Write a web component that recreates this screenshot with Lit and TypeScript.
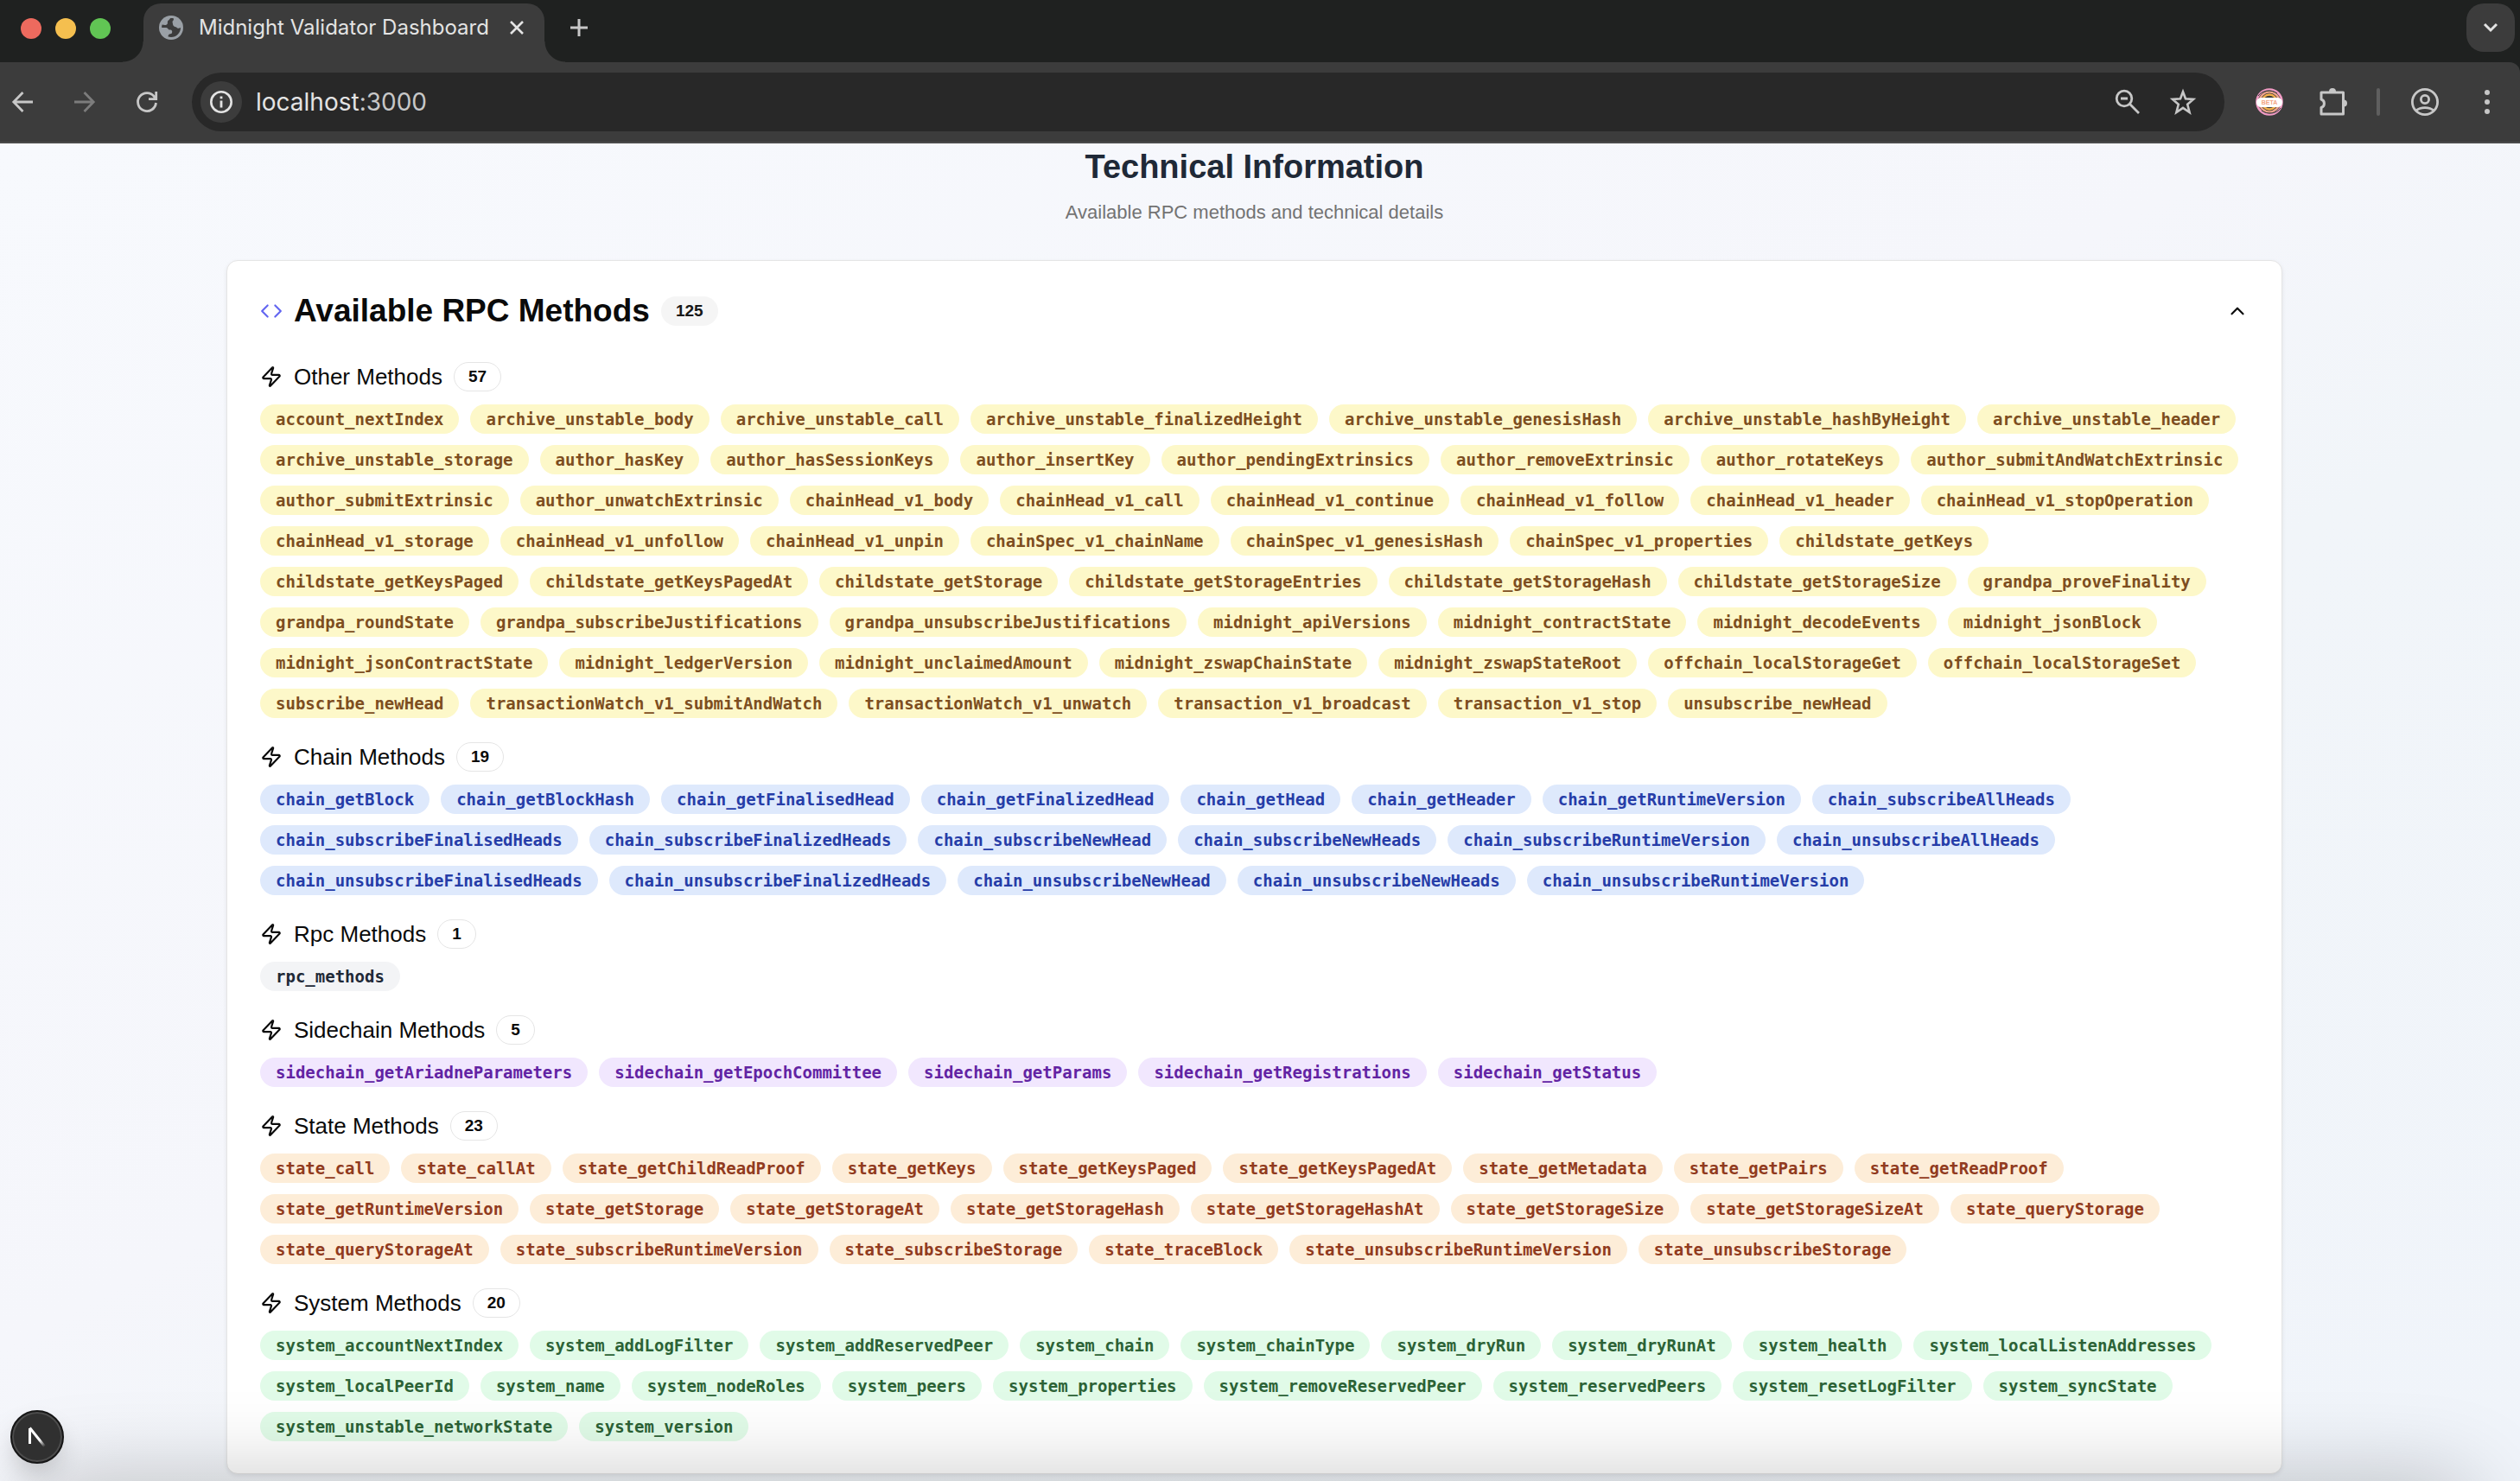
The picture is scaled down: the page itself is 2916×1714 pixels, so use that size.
import { LitElement, html, css } from "lit";
import { customElement, property, state } from "lit/decorators.js";

interface MethodGroup {
  name: string;
  tone: string;
  methods: string[];
}

const list = (prefix: string, names: string): string[] =>
  names.trim().split(/\s+/).map((n) => prefix + n);

const GROUPS: MethodGroup[] = [
  {
    name: "Other",
    tone: "yellow",
    methods: list("", `
      account_nextIndex archive_unstable_body archive_unstable_call archive_unstable_finalizedHeight
      archive_unstable_genesisHash archive_unstable_hashByHeight archive_unstable_header
      archive_unstable_storage author_hasKey author_hasSessionKeys author_insertKey
      author_pendingExtrinsics author_removeExtrinsic author_rotateKeys author_submitAndWatchExtrinsic
      author_submitExtrinsic author_unwatchExtrinsic chainHead_v1_body chainHead_v1_call
      chainHead_v1_continue chainHead_v1_follow chainHead_v1_header chainHead_v1_stopOperation
      chainHead_v1_storage chainHead_v1_unfollow chainHead_v1_unpin chainSpec_v1_chainName
      chainSpec_v1_genesisHash chainSpec_v1_properties childstate_getKeys
      childstate_getKeysPaged childstate_getKeysPagedAt childstate_getStorage
      childstate_getStorageEntries childstate_getStorageHash childstate_getStorageSize
      grandpa_proveFinality grandpa_roundState grandpa_subscribeJustifications
      grandpa_unsubscribeJustifications midnight_apiVersions midnight_contractState
      midnight_decodeEvents midnight_jsonBlock midnight_jsonContractState midnight_ledgerVersion
      midnight_unclaimedAmount midnight_zswapChainState midnight_zswapStateRoot
      offchain_localStorageGet offchain_localStorageSet subscribe_newHead
      transactionWatch_v1_submitAndWatch transactionWatch_v1_unwatch transaction_v1_broadcast
      transaction_v1_stop unsubscribe_newHead`),
  },
  {
    name: "Chain",
    tone: "blue",
    methods: list("chain_", `
      getBlock getBlockHash getFinalisedHead getFinalizedHead getHead getHeader getRuntimeVersion
      subscribeAllHeads subscribeFinalisedHeads subscribeFinalizedHeads subscribeNewHead
      subscribeNewHeads subscribeRuntimeVersion unsubscribeAllHeads unsubscribeFinalisedHeads
      unsubscribeFinalizedHeads unsubscribeNewHead unsubscribeNewHeads unsubscribeRuntimeVersion`),
  },
  { name: "Rpc", tone: "gray", methods: ["rpc_methods"] },
  {
    name: "Sidechain",
    tone: "purple",
    methods: list("sidechain_", `
      getAriadneParameters getEpochCommittee getParams getRegistrations getStatus`),
  },
  {
    name: "State",
    tone: "orange",
    methods: list("state_", `
      call callAt getChildReadProof getKeys getKeysPaged getKeysPagedAt getMetadata getPairs
      getReadProof getRuntimeVersion getStorage getStorageAt getStorageHash getStorageHashAt
      getStorageSize getStorageSizeAt queryStorage queryStorageAt subscribeRuntimeVersion
      subscribeStorage traceBlock unsubscribeRuntimeVersion unsubscribeStorage`),
  },
  {
    name: "System",
    tone: "green",
    methods: list("system_", `
      accountNextIndex addLogFilter addReservedPeer chain chainType dryRun dryRunAt health
      localListenAddresses localPeerId name nodeRoles peers properties removeReservedPeer
      reservedPeers resetLogFilter syncState unstable_networkState version`),
  },
];

@customElement("browser-bar")
export class BrowserBar extends LitElement {
  static styles = css`
    :host { display: block; font-family: Inter, Roboto, "Liberation Sans", sans-serif; }
    button { border: 0; padding: 0; margin: 0; background: none; color: inherit; font: inherit; display: grid; place-items: center; flex: none; }
    svg { display: block; overflow: visible; }
    .strip { display: flex; height: 68px; padding: 4px 6px 0 24px; background: #1f2120; }
    .lights { display: flex; gap: 16px; padding-top: 17px; width: 142px; box-sizing: border-box; }
    .light { width: 24px; height: 24px; border-radius: 50%; }
    .red { background: #ed6a5e; }
    .amber { background: #f5bf4f; }
    .green { background: #61c554; }
    .tab { position: relative; display: flex; align-items: center; width: 464px; height: 68px; box-sizing: border-box; padding: 0 16px 12px 18px; border-radius: 20px 20px 0 0; background: #3c3c3c; color: #e3e3e3; }
    .tab::before, .tab::after { content: ""; position: absolute; bottom: 0; width: 24px; height: 24px; }
    .tab::before { right: 100%; background: radial-gradient(circle at 0 0, transparent 23px, #3c3c3c 24px); }
    .tab::after { left: 100%; background: radial-gradient(circle at 100% 0, transparent 23px, #3c3c3c 24px); }
    .title { flex: 1; margin-left: 18px; font-size: 24px; line-height: 32px; white-space: nowrap; }
    .close { width: 32px; height: 32px; }
    .plus { width: 56px; height: 56px; margin-left: 12px; color: #c7c7c7; }
    .more { width: 56px; height: 56px; margin-left: auto; border-radius: 20px; background: #3c3c3c; color: #e3e3e3; }
    .corner { background: #1f2120; }
    .tools { display: flex; align-items: center; height: 92px; padding: 0 14px 0 2px; background: #3c3c3c; border-bottom: 2px solid #4a4a4a; border-radius: 0 12px 0 0; color: #c7c7c7; }
    .nav { display: flex; gap: 24px; margin-right: 28px; }
    .nav button { width: 48px; height: 48px; }
    .nav .off { color: #7c7c7c; }
    .address { flex: 1; display: flex; align-items: center; height: 68px; box-sizing: border-box; padding: 0 24px 0 10px; border-radius: 34px; background: #282828; }
    .info { width: 48px; height: 48px; border-radius: 50%; background: #3c3c3c; color: #e3e3e3; }
    .url { flex: 1; margin: 0 0 0 16px; font-size: 28px; line-height: 36px; color: #e3e3e3; white-space: nowrap; }
    .port { color: #c7c7c7; }
    .address .act { width: 48px; height: 48px; margin-left: 16px; }
    .ext { width: 48px; height: 48px; }
    .ext.beta { margin-left: 28px; }
    .ext.puzzle { margin-left: 26px; }
    .rule { width: 4px; height: 32px; margin: 0 28px 0 26px; border-radius: 2px; background: #5f5f5f; }
    .ext.menu { margin-left: 24px; }
  `;

  render() {
    return html`
      <div class="strip">
        <div class="lights">
          <span class="light red"></span><span class="light amber"></span><span class="light green"></span>
        </div>
        <div class="tab">
          <svg width="28" height="28" viewBox="0 0 28 28">
            <circle cx="14" cy="14" r="14" fill="#9aa0a6"></circle>
            <path d="M13 3.200C14.500 3 16 3.100 17 3.600 17.200 5 16.200 6.200 15.600 6.800 15.200 7.300 16 8.500 16 10 16 12 18 13.200 19.500 13.200 20.500 13.200 20.500 14.800 22 14.800 23.300 14.800 24 14.400 25 14A11 11 0 0 1 14 25C12.700 25 11.500 24.800 10.600 24.500 10.300 22.500 11.500 21.200 13 21.200 14.800 21.200 15.200 20 15.200 18.500 15 16.800 13.800 16.600 12 16.600 10.600 16.500 10.300 14 8.500 14H3.200C3 13 3.200 11.800 3.600 10.600 6 11 8.500 11.500 9.700 9.700 10.200 8 9.500 6.700 10.600 5.800 11.800 5.200 12 4 13 3.200Z" fill="#3c3c3c"></path>
          </svg>
          <span class="title">Midnight Validator Dashboard</span>
          <button class="close" aria-label="Close tab">
            <svg width="16" height="16" viewBox="0 0 16 16"><path d="M1 1 15 15M15 1 1 15" stroke="currentColor" stroke-width="2.600"></path></svg>
          </button>
        </div>
        <button class="plus" aria-label="New tab">
          <svg width="20" height="20" viewBox="0 0 20 20"><path d="M10 0V20M0 10H20" stroke="currentColor" stroke-width="3"></path></svg>
        </button>
        <button class="more" aria-label="Search tabs">
          <svg width="16" height="10" viewBox="0 0 16 10"><path d="M1 1 8 8 15 1" fill="none" stroke="currentColor" stroke-width="3"></path></svg>
        </button>
      </div>
      <div class="corner">
      <div class="tools">
        <div class="nav">
          <button aria-label="Back">
            <svg width="24" height="24" viewBox="0 0 24 24" fill="none" stroke="currentColor" stroke-width="2.800"><path d="M24 12H2M12.500 1 1.800 12 12.500 23"></path></svg>
          </button>
          <button class="off" aria-label="Forward">
            <svg width="24" height="24" viewBox="0 0 24 24" fill="none" stroke="currentColor" stroke-width="2.800"><path d="M0 12H22M11.500 1 22.200 12 11.500 23"></path></svg>
          </button>
          <button aria-label="Reload">
            <svg width="24" height="24" viewBox="0 0 24 24" fill="none" stroke="currentColor" stroke-width="2.800"><path d="M22.500 13A10.500 10.500 0 1 1 20.500 5.800L22.500 8.600M22.700 0V8.700H14"></path></svg>
          </button>
        </div>
        <div class="address">
          <button class="info" aria-label="Site information">
            <svg width="26" height="26" viewBox="0 0 26 26" fill="none" stroke="currentColor"><circle cx="13" cy="13" r="11.700" stroke-width="2.600"></circle><path d="M13 11.500V19.500M13 6.500V9.300" stroke-width="2.800"></path></svg>
          </button>
          <p class="url">localhost<span class="port">:3000</span></p>
          <button class="act" aria-label="Zoom">
            <svg width="28" height="28" viewBox="0 0 28 28" fill="none" stroke="currentColor" stroke-width="2.800"><circle cx="10" cy="10" r="8.800"></circle><path d="M16.300 16.300 27 27M6 10H14"></path></svg>
          </button>
          <button class="act" aria-label="Bookmark this tab">
            <svg width="30" height="30" viewBox="0 0 30 30" fill="none" stroke="currentColor" stroke-width="2.600"><path d="M15 3.200 18 11.300 27 11.900 20.200 17.700 22.600 27 15 21.900 7.400 27 9.800 17.700 3 11.900 12 11.300Z"></path></svg>
          </button>
        </div>
        <button class="ext beta" aria-label="Beta extension">
          <svg width="32" height="32" viewBox="0 0 32 32" fill="none">
            <circle cx="16" cy="16" r="14.500" stroke="#f19bc4" stroke-width="2.600"></circle>
            <circle cx="16" cy="16" r="11.500" stroke="#f0a58c" stroke-width="2.200"></circle>
            <circle cx="16" cy="16" r="8.500" stroke="#f5b04c" stroke-width="2.400"></circle>
            <path d="M3 9C8 2 18 1 25 6M29 23C24 30 14 31 7 26" stroke="#3c3c3c" stroke-width="1"></path>
            <rect x="1" y="11" width="30" height="11" rx="5.500" fill="#fff"></rect>
            <text x="16" y="19" text-anchor="middle" font-family="Liberation Sans" font-weight="700" font-size="7" fill="#f3a582">BETA</text>
          </svg>
        </button>
        <button class="ext puzzle" aria-label="Extensions">
          <svg width="32" height="32" viewBox="0 0 32 32"><path d="M2 5H27.500V30H2V22.500A5 5 0 0 0 2 13Z" fill="none" stroke="currentColor" stroke-width="3" stroke-linejoin="round"></path><path d="M11 4a4 4 0 0 1 8 0ZM28 13.500a4 4 0 0 1 0 8Z" fill="currentColor"></path></svg>
        </button>
        <span class="rule"></span>
        <button class="ext" aria-label="Profile">
          <svg width="32" height="32" viewBox="0 0 32 32" fill="none" stroke="currentColor" stroke-width="2.800"><circle cx="16" cy="16" r="14.600"></circle><circle cx="16" cy="13" r="4.600"></circle><path d="M5.500 26.200C11 21.500 21 21.500 26.500 26.200"></path></svg>
        </button>
        <button class="ext menu" aria-label="Menu">
          <svg width="6" height="28" viewBox="0 0 6 28" fill="currentColor"><circle cx="3" cy="3" r="3"></circle><circle cx="3" cy="14" r="3"></circle><circle cx="3" cy="25" r="3"></circle></svg>
        </button>
      </div>
      </div>
    `;
  }
}

@customElement("method-group")
export class MethodGroupView extends LitElement {
  @property({ attribute: false }) group!: MethodGroup;

  static styles = css`
    :host { display: block; }
    .head { display: flex; align-items: center; gap: 13px; }
    .head svg { flex: none; display: block; }
    h4 { margin: 0; font-size: 26px; line-height: 34px; font-weight: 400; color: #0a0a0a; }
    .count, .pill { box-sizing: border-box; height: 34px; padding: 0 17px; border: 1px solid transparent; border-radius: 17px; font-size: 19px; line-height: 32px; font-weight: 700; white-space: nowrap; }
    .count { padding: 0 16px; border-color: #e5e5e5; color: #0a0a0a; }
    .pills { display: flex; flex-wrap: wrap; gap: 13px; margin: 15px 0 0; padding: 0; list-style: none; }
    .pill { font-family: "DejaVu Sans Mono", "Liberation Mono", monospace; }
    .yellow { background: #fdf8c9; color: #7d4e1f; }
    .blue { background: #dee9fc; color: #263da8; }
    .gray { background: #f3f4f6; color: #1f2937; }
    .purple { background: #f1e7fe; color: #6223a3; }
    .orange { background: #fdedd8; color: #913b1e; }
    .green { background: #e1fbe8; color: #2c6236; }
  `;

  render() {
    const { name, tone, methods } = this.group;
    return html`
      <div class="head">
        <svg width="26" height="26" viewBox="0 0 24 24" fill="none" stroke="#0a0a0a" stroke-width="2" stroke-linecap="round" stroke-linejoin="round">
          <path d="M4 14a1 1 0 0 1-.78-1.630l9.900-10.200a.5.5 0 0 1 .86.460l-1.920 6.020A1 1 0 0 0 13 10h7a1 1 0 0 1 .78 1.630l-9.900 10.200a.5.5 0 0 1-.86-.46l1.920-6.020A1 1 0 0 0 11 14z"></path>
        </svg>
        <h4>${name} Methods</h4>
        <span class="count">${methods.length}</span>
      </div>
      <ul class="pills">
        ${methods.map((m) => html`<li class="pill ${tone}">${m}</li>`)}
      </ul>
    `;
  }
}

@customElement("app-root")
export class AppRoot extends LitElement {
  @state() private open = true;

  static styles = css`
    :host { display: flex; flex-direction: column; min-height: 100vh; font-family: "Liberation Sans", Arial, sans-serif; }
    main { position: relative; flex: 1; box-sizing: border-box; padding: 5px 275px 10px 262px; background: linear-gradient(to bottom right, #f7f9fd, #f5f6fb 45%, #f1f5f9 60%, #f0f4fa); overflow: hidden; }
    h2 { margin: 0; font-size: 38px; line-height: 44px; font-weight: 700; color: #1f2937; text-align: center; }
    .sub { margin: 17px 0 41px; font-size: 22px; line-height: 28px; color: #737373; text-align: center; }
    .card { box-sizing: border-box; padding: 37px 38px; border: 1px solid #e5e5e5; border-radius: 13px; background: #fff; box-shadow: 0 2px 5px rgba(0, 0, 0, .08); }
    .top { display: flex; align-items: center; gap: 13px; padding-bottom: 38px; }
    .top svg { flex: none; display: block; }
    h3 { margin: 0; font-size: 37px; line-height: 42px; font-weight: 700; color: #0a0a0a; }
    .total { height: 34px; padding: 0 17px; border-radius: 17px; background: #f5f5f5; font-size: 19px; line-height: 34px; font-weight: 700; color: #171717; }
    .toggle { display: grid; place-items: center; width: 26px; height: 26px; margin-left: auto; padding: 0; border: 0; background: none; color: #0a0a0a; }
    .groups { display: flex; flex-direction: column; gap: 28px; }
    .shade { position: absolute; left: 30px; right: 50px; bottom: -80px; height: 80px; border-radius: 40px; box-shadow: 0 0 100px rgba(0, 0, 0, .26); pointer-events: none; }
    .dev { position: absolute; left: 12px; bottom: 22px; display: grid; place-items: center; width: 62px; height: 62px; padding: 0; border: 2px solid #161616; border-radius: 50%; background: #303030; box-shadow: inset 0 0 0 2px #4c4c4c, 0 16px 32px -8px rgba(0, 0, 0, .24); }
  `;

  render() {
    return html`
      <browser-bar></browser-bar>
      <main>
        <h2>Technical Information</h2>
        <p class="sub">Available RPC methods and technical details</p>
        <section class="card">
          <div class="top">
            <svg width="26" height="26" viewBox="0 0 24 24" fill="none" stroke="#6366f1" stroke-width="2" stroke-linecap="round" stroke-linejoin="round"><path d="m16 18 6-6-6-6M8 6l-6 6 6 6"></path></svg>
            <h3>Available RPC Methods</h3>
            <span class="total">125</span>
            <button class="toggle" aria-label="Toggle methods" aria-expanded=${this.open} @click=${() => (this.open = !this.open)}>
              <svg width="26" height="26" viewBox="0 0 24 24" fill="none" stroke="currentColor" stroke-width="2" stroke-linecap="round" stroke-linejoin="round"><path d="m18 15-6-6-6 6"></path></svg>
            </button>
          </div>
          ${this.open
            ? html`<div class="groups">${GROUPS.map((g) => html`<method-group .group=${g}></method-group>`)}</div>`
            : null}
        </section>
        <div class="shade"></div>
        <button class="dev" aria-label="Developer tools">
          <svg width="22" height="24" viewBox="0 0 22 24" fill="none">
            <defs><linearGradient id="fade" x1="3" y1="2" x2="20" y2="23" gradientUnits="userSpaceOnUse"><stop offset=".65" stop-color="#fff"></stop><stop offset="1" stop-color="#fff" stop-opacity="0"></stop></linearGradient></defs>
            <path d="M2.500 20V2" stroke="#fff" stroke-width="3"></path><path d="M2.500 1.500 20 23.500" stroke="url(#fade)" stroke-width="3"></path>
          </svg>
        </button>
      </main>
    `;
  }
}
